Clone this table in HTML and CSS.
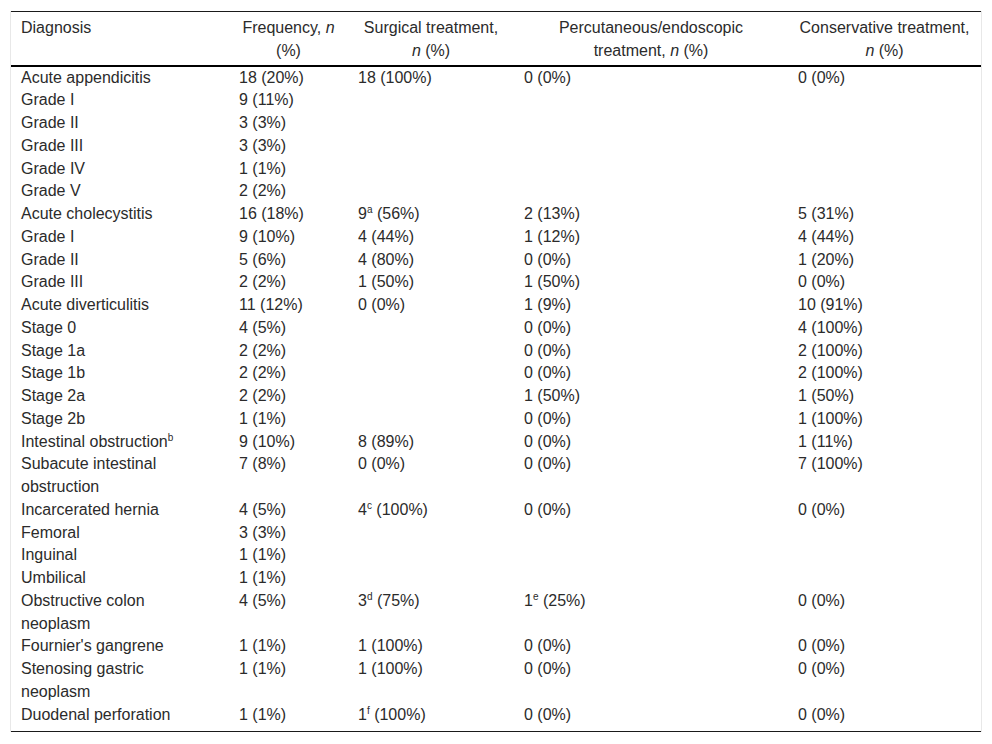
FILE: index.html
```html
<!DOCTYPE html>
<html lang="en">
<head>
<meta charset="utf-8">
<title>Diagnosis and treatment</title>
<link rel="stylesheet" href="styles.css">
</head>
<body>
<div class="wrap">
<table class="data">
  <colgroup>
    <col class="c1"><col class="c2"><col class="c3"><col class="c4"><col class="c5">
  </colgroup>
  <thead>
    <tr>
      <th class="left">Diagnosis</th>
      <th>Frequency, <i>n</i> (%)</th>
      <th>Surgical treatment, <i>n</i> (%)</th>
      <th>Percutaneous/endoscopic treatment, <i>n</i> (%)</th>
      <th>Conservative treatment, <i>n</i> (%)</th>
    </tr>
  </thead>
  <tbody>
    <tr><td>Acute appendicitis</td><td>18 (20%)</td><td>18 (100%)</td><td>0 (0%)</td><td>0 (0%)</td></tr>
    <tr><td>Grade I</td><td>9 (11%)</td><td></td><td></td><td></td></tr>
    <tr><td>Grade II</td><td>3 (3%)</td><td></td><td></td><td></td></tr>
    <tr><td>Grade III</td><td>3 (3%)</td><td></td><td></td><td></td></tr>
    <tr><td>Grade IV</td><td>1 (1%)</td><td></td><td></td><td></td></tr>
    <tr><td>Grade V</td><td>2 (2%)</td><td></td><td></td><td></td></tr>
    <tr><td>Acute cholecystitis</td><td>16 (18%)</td><td>9<sup>a</sup> (56%)</td><td>2 (13%)</td><td>5 (31%)</td></tr>
    <tr><td>Grade I</td><td>9 (10%)</td><td>4 (44%)</td><td>1 (12%)</td><td>4 (44%)</td></tr>
    <tr><td>Grade II</td><td>5 (6%)</td><td>4 (80%)</td><td>0 (0%)</td><td>1 (20%)</td></tr>
    <tr><td>Grade III</td><td>2 (2%)</td><td>1 (50%)</td><td>1 (50%)</td><td>0 (0%)</td></tr>
    <tr><td>Acute diverticulitis</td><td>11 (12%)</td><td>0 (0%)</td><td>1 (9%)</td><td>10 (91%)</td></tr>
    <tr><td>Stage 0</td><td>4 (5%)</td><td></td><td>0 (0%)</td><td>4 (100%)</td></tr>
    <tr><td>Stage 1a</td><td>2 (2%)</td><td></td><td>0 (0%)</td><td>2 (100%)</td></tr>
    <tr><td>Stage 1b</td><td>2 (2%)</td><td></td><td>0 (0%)</td><td>2 (100%)</td></tr>
    <tr><td>Stage 2a</td><td>2 (2%)</td><td></td><td>1 (50%)</td><td>1 (50%)</td></tr>
    <tr><td>Stage 2b</td><td>1 (1%)</td><td></td><td>0 (0%)</td><td>1 (100%)</td></tr>
    <tr><td>Intestinal obstruction<sup>b</sup></td><td>9 (10%)</td><td>8 (89%)</td><td>0 (0%)</td><td>1 (11%)</td></tr>
    <tr><td>Subacute intestinal obstruction</td><td>7 (8%)</td><td>0 (0%)</td><td>0 (0%)</td><td>7 (100%)</td></tr>
    <tr><td>Incarcerated hernia</td><td>4 (5%)</td><td>4<sup>c</sup> (100%)</td><td>0 (0%)</td><td>0 (0%)</td></tr>
    <tr><td>Femoral</td><td>3 (3%)</td><td></td><td></td><td></td></tr>
    <tr><td>Inguinal</td><td>1 (1%)</td><td></td><td></td><td></td></tr>
    <tr><td>Umbilical</td><td>1 (1%)</td><td></td><td></td><td></td></tr>
    <tr><td>Obstructive colon neoplasm</td><td>4 (5%)</td><td>3<sup>d</sup> (75%)</td><td>1<sup>e</sup> (25%)</td><td>0 (0%)</td></tr>
    <tr><td>Fournier's gangrene</td><td>1 (1%)</td><td>1 (100%)</td><td>0 (0%)</td><td>0 (0%)</td></tr>
    <tr><td>Stenosing gastric neoplasm</td><td>1 (1%)</td><td>1 (100%)</td><td>0 (0%)</td><td>0 (0%)</td></tr>
    <tr class="last"><td>Duodenal perforation</td><td>1 (1%)</td><td>1<sup>f</sup> (100%)</td><td>0 (0%)</td><td>0 (0%)</td></tr>
  </tbody>
</table>
</div>
</body>
</html>
```
FILE: styles.css
```css
html, body {
  margin: 0;
  padding: 0;
  background: #ffffff;
}

body {
  font-family: "Liberation Sans", Arial, sans-serif;
  font-size: 16px;
  color: #2b2b2b;
}

.wrap {
  margin: 11px 10px 0 10px;
  border-left: 1px solid #e8e8e8;
  border-right: 1px solid #e8e8e8;
}

.data {
  width: 100%;
  border-collapse: collapse;
  table-layout: fixed;
  border-top: 1px solid #1a1a1a;
  border-bottom: 1px solid #1a1a1a;
}

.c1 { width: 218px; }
.c2 { width: 119px; }
.c3 { width: 166px; }
.c4 { width: 274px; }
.c5 { width: 193px; }

.data th {
  font-weight: normal;
  text-align: center;
  vertical-align: top;
  padding: 5px 10px 2px 10px;
  line-height: 22.75px;
  border-bottom: 2px solid #000000;
}

.data th.left {
  text-align: left;
}

.data td {
  padding: 0 10px;
  line-height: 22.75px;
  vertical-align: top;
  text-align: left;
}

.data td:first-child {
  padding-right: 16px;
}

.data tr.last td {
  padding-bottom: 5px;
}

.data sup {
  font-size: 10px;
  line-height: 0;
  vertical-align: 6px;
}
```
